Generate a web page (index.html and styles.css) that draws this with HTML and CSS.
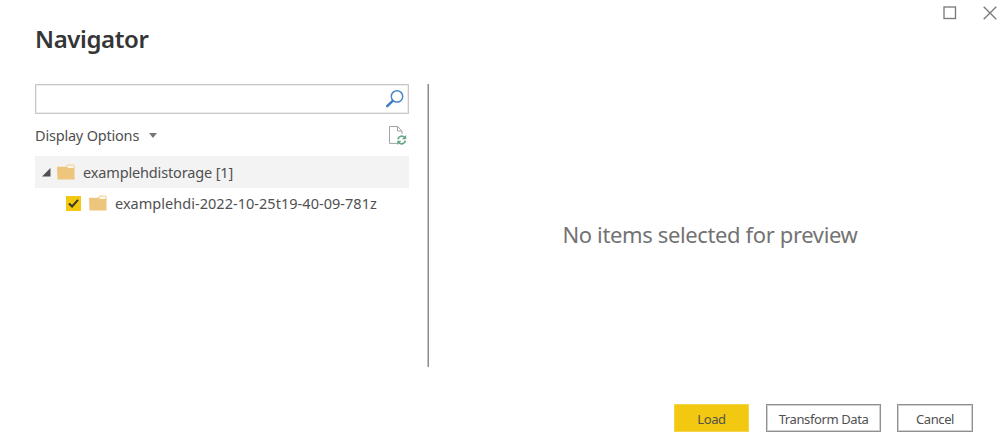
FILE: index.html
```
<!DOCTYPE html>
<html lang="en">
<head>
<meta charset="utf-8">
<title>Navigator</title>
<link rel="stylesheet" href="styles.css">
</head>
<body>
<div class="dialog">
  <div class="window-controls">
    <svg width="14" height="14" viewBox="0 0 14 14"><rect x="1" y="1" width="11.5" height="11.5" fill="none" stroke="#777" stroke-width="1.3"/></svg>
    <svg width="14" height="14" viewBox="0 0 14 14"><path d="M.7.7 13.3 13.3M13.3.7.7 13.3" fill="none" stroke="#777" stroke-width="1.3"/></svg>
  </div>
  <h1 class="title"><span>Navigator</span></h1>
  <main class="content">
    <section class="sidebar">
      <div class="search">
        <svg width="20" height="20" viewBox="0 0 20 20"><circle cx="12" cy="7.4" r="5.7" fill="none" stroke="#4a86c8" stroke-width="1.5"/><path d="M7.7 11.8 2.2 17.1" stroke="#3f7cc0" stroke-width="2.5" stroke-linecap="round"/></svg>
      </div>
      <div class="options">
        <span class="options-label">Display Options</span>
        <span class="caret"></span>
        <svg class="refresh" width="19" height="20" viewBox="0 0 19 20"><path d="M9 18.4H1.5V1.5H9.5L14 6V9" fill="none" stroke="#a3a3a3"/><path d="M9.5 1.5V6H14" fill="none" stroke="#a3a3a3"/><g fill="none" stroke="#6ba58a" stroke-width="1.8"><path d="M10 14.2A3.9 3.9 0 0 1 16.7 12.4M17.4 15.7A3.9 3.9 0 0 1 10.8 17.6"/></g><path d="M18.2 10V14.3H13.9ZM9.2 20V15.7H13.5Z" fill="#6ba58a"/></svg>
      </div>
      <div class="row parent">
        <svg class="expander" width="9" height="9" viewBox="0 0 9 9"><path d="M8.5 0V8.5H0Z" fill="#505050"/></svg>
        <svg class="folder" width="18" height="16" viewBox="0 0 18 16"><path d="M9.5 3 10.6 1H16.2Q17 1 17 1.8V5" fill="#fff7e8" stroke="#eecb8b"/><path d="M0 2.8H10L11 4H17.5V15.5H.5Z" fill="#edc57d"/></svg>
        <span class="parent-label">examplehdistorage [1]</span>
      </div>
      <div class="row child">
        <span class="checkbox"><svg width="15" height="15" viewBox="0 0 15 15"><path d="M3 7.4 6.1 10.5 12 3.9" fill="none" stroke="#3b3a25" stroke-width="2.1"/></svg></span>
        <svg class="folder" width="18" height="16" viewBox="0 0 18 16"><path d="M9.5 3 10.6 1H16.2Q17 1 17 1.8V5" fill="#fff7e8" stroke="#eecb8b"/><path d="M0 2.8H10L11 4H17.5V15.5H.5Z" fill="#edc57d"/></svg>
        <span class="child-label">examplehdi-2022-10-25t19-40-09-781z</span>
      </div>
    </section>
    <div class="divider"></div>
    <section class="preview"><span>No items selected for preview</span></section>
  </main>
  <footer class="actions">
    <button class="button load"><span>Load</span></button>
    <button class="button transform"><span>Transform Data</span></button>
    <button class="button cancel"><span>Cancel</span></button>
  </footer>
</div>
</body>
</html>
```
FILE: styles.css
```
* { box-sizing: border-box; }
body { margin: 0; background: #fff; color: #505050; font-family: "Noto Sans", "Open Sans", sans-serif; }
svg { display: block; flex: none; }
.dialog { height: 448px; display: flex; flex-direction: column; overflow: hidden; }
.window-controls { height: 24px; display: flex; justify-content: flex-end; gap: 26px; padding: 6px 3px 0 0; }
.title { height: 60px; margin: 0; padding-left: 35px; font-size: 24px; line-height: 29px; font-weight: 600; letter-spacing: -.4px; color: #353535; }
.content { height: 283px; display: flex; padding-left: 35px; }
.sidebar { width: 374px; }
.search { height: 30px; border: 1px solid #c8c8c8; box-shadow: inset 0 0 0 1px #ececec; display: flex; justify-content: flex-end; padding: 4px 3px 0 0; }
.options { height: 42px; display: flex; align-items: center; font-size: 14.5px; letter-spacing: -.2px; white-space: nowrap; }
.options-label { width: 114px; }
.caret { border: 4px solid transparent; border-top: 5px solid #777; border-bottom: 0; }
.refresh { margin-left: auto; margin-right: 2px; }
.row { display: flex; align-items: center; white-space: nowrap; }
.parent { height: 32px; padding-left: 7px; background: #f3f3f3; font-size: 14.5px; letter-spacing: -.15px; }
.expander { margin-right: 6px; }
.folder { margin-right: 8px; }
.child { height: 30px; padding-left: 31px; font-size: 14.5px; letter-spacing: .03px; }
.checkbox { width: 15px; height: 15px; margin-right: 8px; background: #f2c811; }
.divider { width: 2px; margin-left: 18px; border-left: 1px solid #c4c4c4; border-right: 1px solid #8c8c8c; }
.preview { flex: 1; display: flex; align-items: center; justify-content: center; padding: 17px 9px 0 0; font-size: 22px; letter-spacing: -.37px; color: #737373; white-space: nowrap; }
.actions { display: flex; justify-content: flex-end; gap: 17px; padding: 37px 27px 0 0; }
.button { height: 28px; padding: 2px 0 0; border: 1px solid #909090; box-shadow: inset 0 0 0 1px #d0d0d0; background: #fff; color: #505050; font: 13px/24px "Noto Sans", "Open Sans", sans-serif; letter-spacing: -.4px; white-space: nowrap; }
.load { width: 75px; border-color: #f4d548; box-shadow: none; background: #f2c811; }
.transform { width: 115px; margin-right: -1px; }
.cancel { width: 76px; }
```
